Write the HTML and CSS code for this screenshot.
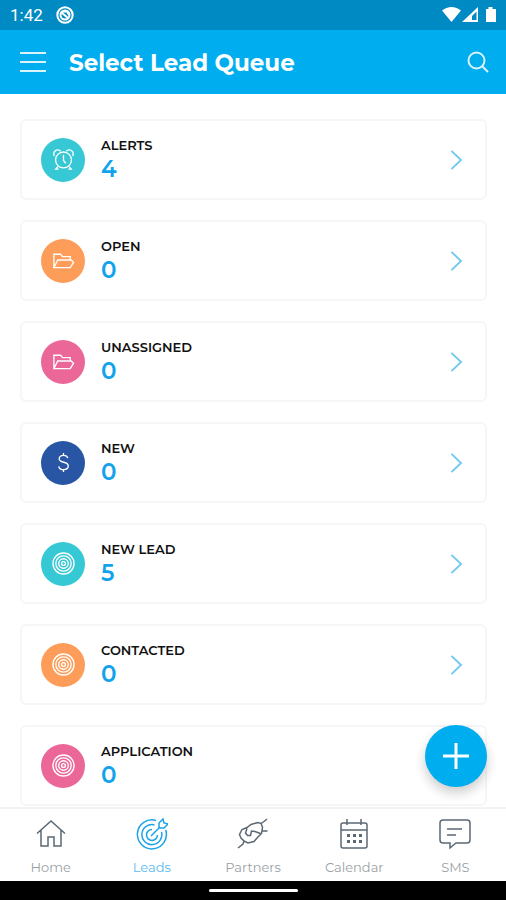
FILE: index.html
```html
<!DOCTYPE html>
<html lang="en">
<head>
    <meta charset="UTF-8">
    <title>Select Lead Queue</title>
    <meta name="viewport" content="width=device-width, initial-scale=1">
    <link rel="stylesheet" href="styles.css">
</head>
<body>
    <!-- shared icons -->
    <svg class="sprite" aria-hidden="true">
        <symbol id="icon-alarm" viewBox="0 0 24 24">
            <circle cx="12" cy="12.5" r="8.3"/>
            <path d="M12 7v6l2.5 3M6 19.500l-2 2.500h3M18 19.500l2 2.500h-3M2.500 8.500C.5 5.500 3 2 6 2c1.500 0 2.500.5 3 1.500M21.500 8.500C23.500 5.500 21 2 18 2c-1.500 0-2.500.5-3 1.500"/>
        </symbol>
        <symbol id="icon-folder" viewBox="0 0 24 24">
            <path d="M2 19.500V5.500h7l2 2.500h8v3.500M2 19.500l4-8h14l2.500 2.500-3.500 5.500z"/>
        </symbol>
        <symbol id="icon-dollar" viewBox="0 0 24 24">
            <path d="M16.500 7.500C16 5.500 14.500 4.500 12 4.500c-2.500 0-4.500 1.300-4.500 3.500 0 5 9.500 2.500 9.500 7.500 0 2.500-2 4-5 4-2.800 0-4.500-1.300-5-3.500M12 2v2.500M12 19.500V22"/>
        </symbol>
        <symbol id="icon-target" viewBox="0 0 24 24">
            <circle cx="12" cy="12" r="11"/>
            <circle cx="12" cy="12" r="8"/>
            <circle cx="12" cy="12" r="5"/>
            <circle cx="12" cy="12" r="2"/>
        </symbol>
        <symbol id="icon-chevron" viewBox="0 0 24 24">
            <path d="M7 2l10.500 10L7 22"/>
        </symbol>
    </svg>

    <div class="status-bar">
        <span class="time">1:42</span>
        <svg class="status-app" viewBox="0 0 18 18">
            <circle cx="9" cy="9" r="7.700"/>
            <circle cx="9" cy="9" r="4.500"/>
            <path d="M5.500 6.500l7 6M7 5.500h4l2 3.500"/>
        </svg>
        <svg class="status-icons" viewBox="0 0 56 18">
            <path d="M0 4.500C5.500-.2 13.500-.2 19 4.500L9.500 16z"/>
            <path fill-rule="evenodd" d="M36 1v15H20zM34.500 5.500L30 10v4h4.500z"/>
            <path d="M44 3h2.500V1h4v2H54v13H44z"/>
        </svg>
    </div>

    <header class="header">
        <button class="icon-button" type="button" aria-label="Menu">
            <svg class="menu-icon" viewBox="0 0 26 22"><path d="M0 2h26M0 11h26M0 20h26"/></svg>
        </button>
        <h1 class="title">Select Lead Queue</h1>
        <button class="icon-button" type="button" aria-label="Search">
            <svg class="search-icon" viewBox="0 0 22 22"><circle cx="9.500" cy="9.500" r="8"/><path d="M15.500 15.500l5.500 5.500"/></svg>
        </button>
    </header>

    <div class="content">
        <main class="queue-list">
            <a class="queue" href="#alerts">
                <span class="badge teal"><svg><use href="#icon-alarm"/></svg></span>
                <span class="queue-text"><span class="name">ALERTS</span><span class="count">4</span></span>
                <svg class="chevron"><use href="#icon-chevron"/></svg>
            </a>
            <a class="queue" href="#open">
                <span class="badge orange"><svg><use href="#icon-folder"/></svg></span>
                <span class="queue-text"><span class="name">OPEN</span><span class="count">0</span></span>
                <svg class="chevron"><use href="#icon-chevron"/></svg>
            </a>
            <a class="queue" href="#unassigned">
                <span class="badge pink"><svg><use href="#icon-folder"/></svg></span>
                <span class="queue-text"><span class="name">UNASSIGNED</span><span class="count">0</span></span>
                <svg class="chevron"><use href="#icon-chevron"/></svg>
            </a>
            <a class="queue" href="#new">
                <span class="badge navy"><svg><use href="#icon-dollar"/></svg></span>
                <span class="queue-text"><span class="name">NEW</span><span class="count">0</span></span>
                <svg class="chevron"><use href="#icon-chevron"/></svg>
            </a>
            <a class="queue" href="#new-lead">
                <span class="badge teal"><svg><use href="#icon-target"/></svg></span>
                <span class="queue-text"><span class="name">NEW LEAD</span><span class="count">5</span></span>
                <svg class="chevron"><use href="#icon-chevron"/></svg>
            </a>
            <a class="queue" href="#contacted">
                <span class="badge orange"><svg><use href="#icon-target"/></svg></span>
                <span class="queue-text"><span class="name">CONTACTED</span><span class="count">0</span></span>
                <svg class="chevron"><use href="#icon-chevron"/></svg>
            </a>
            <a class="queue" href="#application">
                <span class="badge pink"><svg><use href="#icon-target"/></svg></span>
                <span class="queue-text"><span class="name">APPLICATION</span><span class="count">0</span></span>
            </a>
        </main>
        <button class="add-button" type="button" aria-label="Add lead">
            <svg viewBox="0 0 26 26"><path d="M13 0v26M0 13h26"/></svg>
        </button>
    </div>

    <nav class="tabs">
        <a class="tab" href="#home">
            <svg viewBox="0 0 32 32"><path d="M2 15.500L16 3l14 12.500M6 12v16h7v-9h6v9h7V12"/></svg>
            Home
        </a>
        <a class="tab active" href="#leads">
            <svg viewBox="0 0 32 32">
                <path d="M20 2.500A14.500 14.500 0 1 0 29.700 12M18.500 7A10 10 0 1 0 25.500 14M16 11.500A5.500 5.500 0 1 0 21.500 17"/>
                <path d="M15 18l9-9M23 9V5l4-4 1 4 4 1-4 4h-5z"/>
            </svg>
            Leads
        </a>
        <a class="tab" href="#partners">
            <svg viewBox="0 0 32 32">
                <path d="M30 1l-3 2.500-3 2-3-1-7 2-4 3-5 2-2.500 5L4 20l3 3-1 3-5 4M7 23l4 2 6-1.500 3.500-4 4-4 .5-3M24 5.500l1.500 3.500-.5 4h5.500M10 10.500L8.500 15l2 2.500h3l1-4.500 3.500.5 5.500 2"/>
            </svg>
            Partners
        </a>
        <a class="tab" href="#calendar">
            <svg viewBox="0 0 32 32">
                <rect x="3" y="5" width="26" height="25" rx="2"/>
                <path d="M3 12h26M9 1v6M23 1v6"/>
                <path class="dots" d="M9 16h3v3H9zM15 16h3v3h-3zM21 16h3v3h-3zM9 22h3v3H9zM15 22h3v3h-3zM21 22h3v3h-3z"/>
            </svg>
            Calendar
        </a>
        <a class="tab" href="#sms">
            <svg viewBox="0 0 32 32"><path d="M4 2h24q3 0 3 3v17q0 3-3 3H17l-6 5v-5H4q-3 0-3-3V5q0-3 3-3zM8 11h15M8 17h9"/></svg>
            SMS
        </a>
    </nav>
    <div class="gesture-bar"><span class="gesture-pill"></span></div>
</body>
</html>
```
FILE: styles.css
```css
* {
    box-sizing: border-box;
}

body {
    font-family: Montserrat, Inter, "Open Sans", sans-serif;
    display: flex;
    flex-direction: column;
    height: 100vh;
    margin: 0;
    background-color: #fff;
}

svg {
    fill: none;
    stroke: currentColor;
    flex-shrink: 0;
}

a {
    color: inherit;
    text-decoration: none;
}

button {
    border: none;
    padding: 0;
    cursor: pointer;
    color: white;
}

.sprite {
    display: none;
}

.status-bar {
    display: flex;
    align-items: center;
    flex-shrink: 0;
    height: 30px;
    padding: 0 8px 0 10px;
    background-color: #008ac3;
    color: white;
}

.time {
    font-family: Roboto, sans-serif;
    font-size: 17px;
}

.status-app {
    width: 18px;
    height: 18px;
    margin-left: 13px;
    stroke-width: 2;
}

.status-icons {
    width: 56px;
    height: 18px;
    margin-left: auto;
    fill: white;
    stroke: none;
}

.header {
    display: flex;
    align-items: center;
    flex-shrink: 0;
    height: 64px;
    padding: 0 17px 0 20px;
    background-color: #00aeef;
    color: white;
}

.icon-button {
    display: flex;
    background: none;
}

.menu-icon {
    width: 26px;
    height: 22px;
    stroke-width: 2;
    opacity: 0.85;
}

.search-icon {
    width: 22px;
    height: 22px;
    stroke-width: 2;
    opacity: 0.85;
}

.title {
    flex: 1;
    margin: 0 0 0 23px;
    padding-top: 2px;
    font-size: 23px;
    line-height: 32px;
    font-weight: 700;
}

.content {
    position: relative;
    flex: 1;
    min-height: 0;
}

.queue-list {
    display: flex;
    flex-direction: column;
    gap: 20px;
    height: 100%;
    padding: 25px 19px 0 20px;
    overflow-y: auto;
    scrollbar-width: none;
}

.queue {
    display: flex;
    align-items: center;
    flex-shrink: 0;
    gap: 16px;
    padding: 14px 17px 14px 19px;
    border: 2px solid #f6f6f6;
    border-radius: 6px;
}

.badge {
    display: flex;
    align-items: center;
    justify-content: center;
    width: 44px;
    height: 44px;
    border-radius: 50%;
    color: white;
}

.badge svg {
    width: 23px;
    height: 23px;
    stroke-width: 1.4;
}

.teal {
    background-color: #36c8d4;
}

.orange {
    background-color: #fd9d59;
}

.pink {
    background-color: #ea6798;
}

.navy {
    background-color: #2856a5;
}

.queue-text {
    display: flex;
    flex: 1;
    flex-direction: column;
}

.name {
    font-size: 13px;
    line-height: 20px;
    font-weight: 600;
    color: #111;
}

.count {
    font-size: 23px;
    line-height: 29px;
    font-weight: 600;
    color: #13a3ec;
}

.chevron {
    width: 24px;
    height: 22px;
    stroke: #6fc8f0;
    stroke-width: 2;
}

.add-button {
    position: absolute;
    right: 19px;
    bottom: 20px;
    display: flex;
    align-items: center;
    justify-content: center;
    width: 62px;
    height: 62px;
    border-radius: 50%;
    background-color: #00aeef;
    box-shadow: 0 6px 12px rgba(0, 0, 0, 0.2);
}

.add-button svg {
    width: 26px;
    height: 26px;
    stroke-width: 3;
}

.tabs {
    display: flex;
    flex-shrink: 0;
    height: 74px;
    border-top: 2px solid #f3f3f3;
    background-color: #fff;
}

.tab {
    display: flex;
    flex: 1;
    flex-direction: column;
    align-items: center;
    gap: 8px;
    padding-top: 9px;
    font-size: 13px;
    line-height: 18px;
    font-weight: 400;
    color: #9a9fa4;
}

.tab svg {
    width: 32px;
    height: 32px;
    stroke: #5c6874;
    stroke-width: 1.5;
}

.tab .dots {
    fill: #5c6874;
    stroke: none;
}

.tab.active,
.tab.active svg {
    color: #58bbed;
    stroke: #1ba4e6;
}

.gesture-bar {
    display: flex;
    align-items: center;
    justify-content: center;
    flex-shrink: 0;
    height: 19px;
    background-color: #000;
}

.gesture-pill {
    width: 89px;
    height: 3px;
    border-radius: 2px;
    background-color: #fff;
}
```
